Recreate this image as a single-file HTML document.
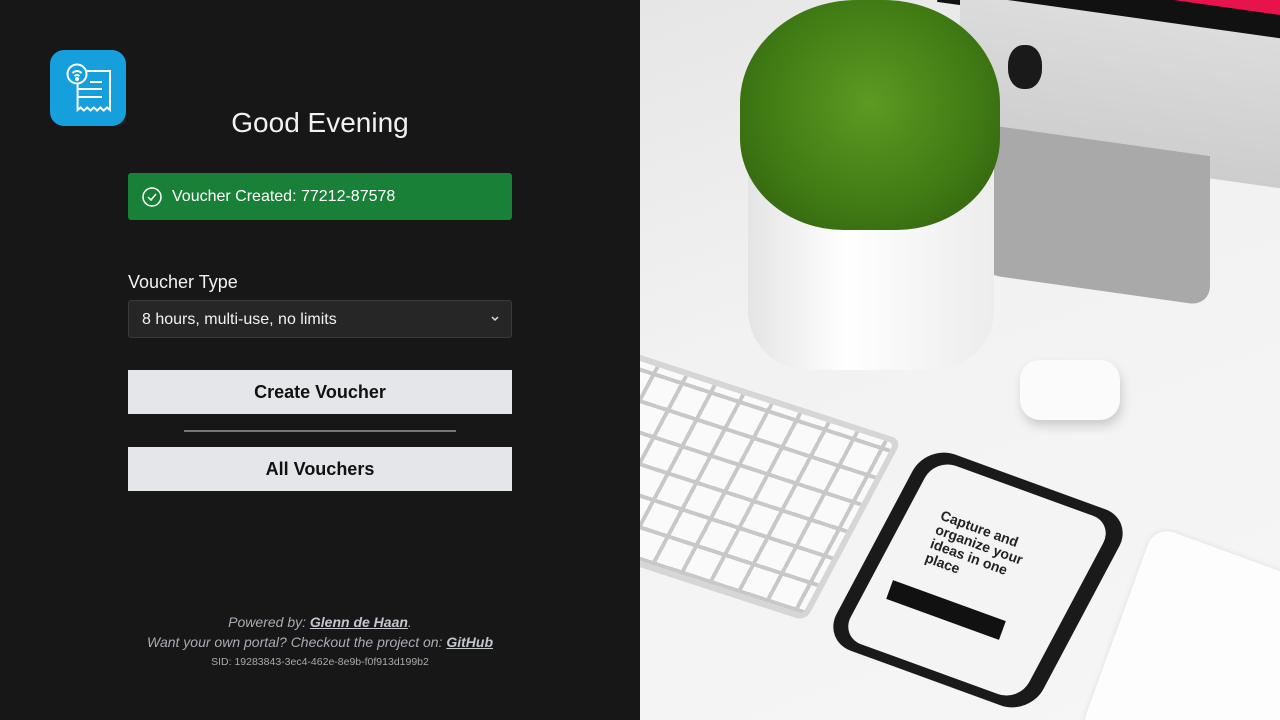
<!DOCTYPE html>
<html><head><style>
html,body{margin:0;width:1280px;height:720px;overflow:hidden}
body{font-family:"Liberation Sans",sans-serif;background:#171717;position:relative}
.left{position:absolute;left:0;top:0;width:640px;height:720px;background:#171717;color:#fff}
.right{position:absolute;left:640px;top:0;width:640px;height:720px;background:linear-gradient(160deg,#e6e6e6 0%,#f2f2f2 40%,#f6f6f6 100%);overflow:hidden}
.logo{position:absolute;left:50px;top:50px;width:76px;height:76px;border-radius:14px;background:#159fdd}
h1{position:absolute;left:0;width:640px;top:107px;margin:0;text-align:center;font-weight:400;font-size:28px;color:#f2f2f2}
.alert{position:absolute;left:128px;top:173px;width:384px;height:47px;background:#198038;border-radius:3px;font-size:16px;line-height:47px;color:#fff}
.alert span{position:absolute;left:44px}
.lbl{position:absolute;left:128px;top:272px;font-size:18px;color:#f2f2f2}
.sel{position:absolute;left:128px;top:300px;width:382px;height:36px;border:1px solid #3a3a3a;background:#262626;border-radius:3px;font-size:16px;line-height:38px;color:#f2f2f2;text-indent:13px}
.btn{position:absolute;left:128px;width:384px;height:44px;background:#e4e6ea;color:#111;font-weight:700;font-size:18px;text-align:center;line-height:44px}
.hr{position:absolute;left:184px;top:430px;width:272px;height:2px;background:#777}
.foot{position:absolute;left:0;width:640px;text-align:center;color:#a9acb3;font-style:italic;font-size:14px}
.foot b{text-decoration:underline;color:#c3c6cc}
.sid{position:absolute;left:0;width:640px;text-align:center;top:656px;font-size:10.5px;color:#aaa}
</style></head><body>
<div class="left">
<div class="logo"><svg width="76" height="76" viewBox="0 0 76 76" fill="none" stroke="#fff" stroke-width="2">
<circle cx="27" cy="24" r="9.5"/><path d="M22.5 23q4.5-4 9 0M24.5 26q2.5-2 5 0"/><circle cx="27" cy="29" r="1" fill="#fff"/>
<path d="M37 21h23v39l-3-2.5-3.3 3-3.3-3-3.3 3-3.3-3-3.3 3-3.3-3-3.3 3-3.3-3-3 2.5V34"/><path d="M40 32h12M27 39h25M27 47h25"/></svg></div>
<h1>Good Evening</h1>
<div class="alert"><svg style="position:absolute;left:14px;top:14px" width="20" height="20" viewBox="0 0 20 20" fill="none" stroke="#fff" stroke-width="1.5"><circle cx="10" cy="10" r="9"/><path d="M6 10l3 3 5-6"/></svg><span>Voucher Created: 77212-87578</span></div>
<div class="lbl">Voucher Type</div>
<div class="sel">8 hours, multi-use, no limits<svg style="position:absolute;right:12px;top:15px" width="8" height="6" viewBox="0 0 8 6" fill="none" stroke="#ddd" stroke-width="1.5"><path d="M1 1l3 3 3-3"/></svg></div>
<div class="btn" style="top:370px">Create Voucher</div>
<div class="hr"></div>
<div class="btn" style="top:447px">All Vouchers</div>
<div class="foot" style="top:614px">Powered by: <b>Glenn de Haan</b>.</div>
<div class="foot" style="top:634px">Want your own portal? Checkout the project on: <b>GitHub</b></div>
<div class="sid">SID: 19283843-3ec4-462e-8e9b-f0f913d199b2</div>
</div>
<div class="right">
<div style="position:absolute;left:300px;top:-40px;width:400px;height:70px;background:#111;transform:rotate(8deg)"></div>
<div style="position:absolute;left:520px;top:-20px;width:200px;height:32px;background:#e8124c;transform:rotate(8deg)"></div>
<div style="position:absolute;left:320px;top:20px;width:380px;height:150px;background:linear-gradient(180deg,#dcdcdc,#cdcdcd);transform:skewY(8deg)"></div>
<div style="position:absolute;left:340px;top:140px;width:230px;height:150px;background:#a9a9a9;border-radius:0 0 20px 20px;transform:skewY(8deg)"></div>
<div style="position:absolute;left:368px;top:45px;width:34px;height:44px;border-radius:45%;background:#1a1a1a"></div>
<div style="position:absolute;left:108px;top:150px;width:246px;height:220px;background:linear-gradient(90deg,#e4e4e4,#fff 40%,#ececec);border-radius:10px 10px 60px 60px"></div>
<div style="position:absolute;left:100px;top:0px;width:260px;height:230px;background:radial-gradient(ellipse at 50% 45%,#5c9a22,#3f7a14 60%,#2d5a0c);border-radius:45% 45% 40% 40%"></div>
<div style="position:absolute;left:-150px;top:440px;width:400px;height:190px;transform-origin:top right;transform:rotate(18deg) skewX(-10deg);border-radius:10px;background-color:#fafafa;background-image:repeating-linear-gradient(90deg,#c8c8c8 0 4px,transparent 4px 30px),repeating-linear-gradient(0deg,#c8c8c8 0 4px,transparent 4px 30px);border:6px solid #d6d6d6"></div>
<div style="position:absolute;left:380px;top:360px;width:100px;height:60px;background:#fbfbfb;border-radius:20px;box-shadow:2px 6px 10px #ccc"></div>
<div style="position:absolute;left:228px;top:470px;width:220px;height:220px;background:#1a1a1a;border-radius:30px;transform:rotate(20deg) skewX(-8deg)"></div>
<div style="position:absolute;left:242px;top:480px;width:190px;height:200px;background:#f4f4f4;border-radius:22px;transform:rotate(20deg) skewX(-8deg)"></div>
<div style="position:absolute;left:290px;top:525px;transform:rotate(20deg);font-size:14px;color:#222;font-weight:700;line-height:15px;width:110px">Capture and organize your ideas in one place</div>
<div style="position:absolute;left:246px;top:600px;width:120px;height:20px;background:#111;transform:rotate(20deg)"></div>
<div style="position:absolute;left:470px;top:560px;width:240px;height:220px;background:#fdfdfd;border-radius:20px;transform:rotate(20deg);box-shadow:0 0 6px #ddd"></div>
</div>
</body></html>
